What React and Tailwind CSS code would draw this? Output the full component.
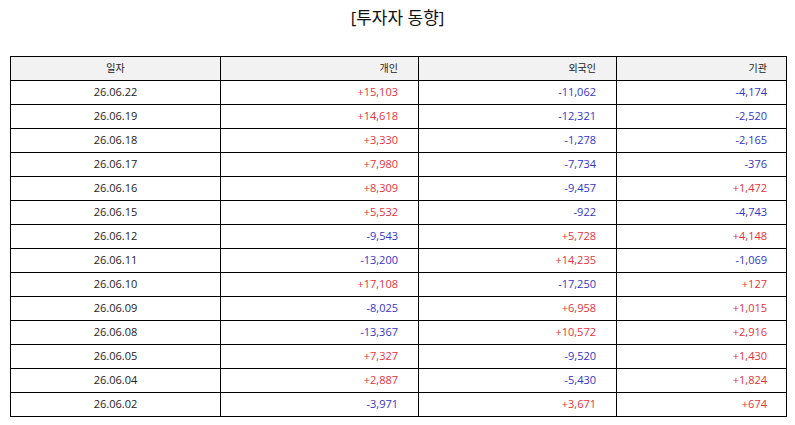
const rows = [
  ["26.06.22", "+15,103", "-11,062", "-4,174"],
  ["26.06.19", "+14,618", "-12,321", "-2,520"],
  ["26.06.18", "+3,330", "-1,278", "-2,165"],
  ["26.06.17", "+7,980", "-7,734", "-376"],
  ["26.06.16", "+8,309", "-9,457", "+1,472"],
  ["26.06.15", "+5,532", "-922", "-4,743"],
  ["26.06.12", "-9,543", "+5,728", "+4,148"],
  ["26.06.11", "-13,200", "+14,235", "-1,069"],
  ["26.06.10", "+17,108", "-17,250", "+127"],
  ["26.06.09", "-8,025", "+6,958", "+1,015"],
  ["26.06.08", "-13,367", "+10,572", "+2,916"],
  ["26.06.05", "+7,327", "-9,520", "+1,430"],
  ["26.06.04", "+2,887", "-5,430", "+1,824"],
  ["26.06.02", "-3,971", "+3,671", "+674"],
];

const tone = (v) => (v.startsWith("-") ? "text-[#3434c8]" : "text-[#e6323c]");

export default function App() {
  return (
    <div className="w-[795px] h-[425px] bg-white font-['Open_Sans','Noto_Sans_CJK_KR',sans-serif] text-[#222]">
      <h1 className="pt-[6px] text-center text-[17px] leading-[24px] text-[#111]">[투자자 동향]</h1>
      <div className="px-[10px] pt-[26px]">
        <table className="w-[776px] table-fixed border-collapse text-[11px]">
          <colgroup>
            <col className="w-[210px]" />
            <col className="w-[198px]" />
            <col className="w-[198px]" />
            <col className="w-[170px]" />
          </colgroup>
          <thead>
            <tr className="h-[24px] bg-[#f2f2f2] text-[10px]">
              <th className="border border-black font-normal text-center">일자</th>
              <th className="border border-black font-normal text-right pr-[20px]">개인</th>
              <th className="border border-black font-normal text-right pr-[20px]">외국인</th>
              <th className="border border-black font-normal text-right pr-[19px]">기관</th>
            </tr>
          </thead>
          <tbody>
            {rows.map((r) => (
              <tr key={r[0]} className="h-[24px]">
                <td className="border border-black text-center">{r[0]}</td>
                <td className={`border border-black text-right pr-[20px] ${tone(r[1])}`}>{r[1]}</td>
                <td className={`border border-black text-right pr-[20px] ${tone(r[2])}`}>{r[2]}</td>
                <td className={`border border-black text-right pr-[19px] ${tone(r[3])}`}>{r[3]}</td>
              </tr>
            ))}
          </tbody>
        </table>
      </div>
    </div>
  );
}
